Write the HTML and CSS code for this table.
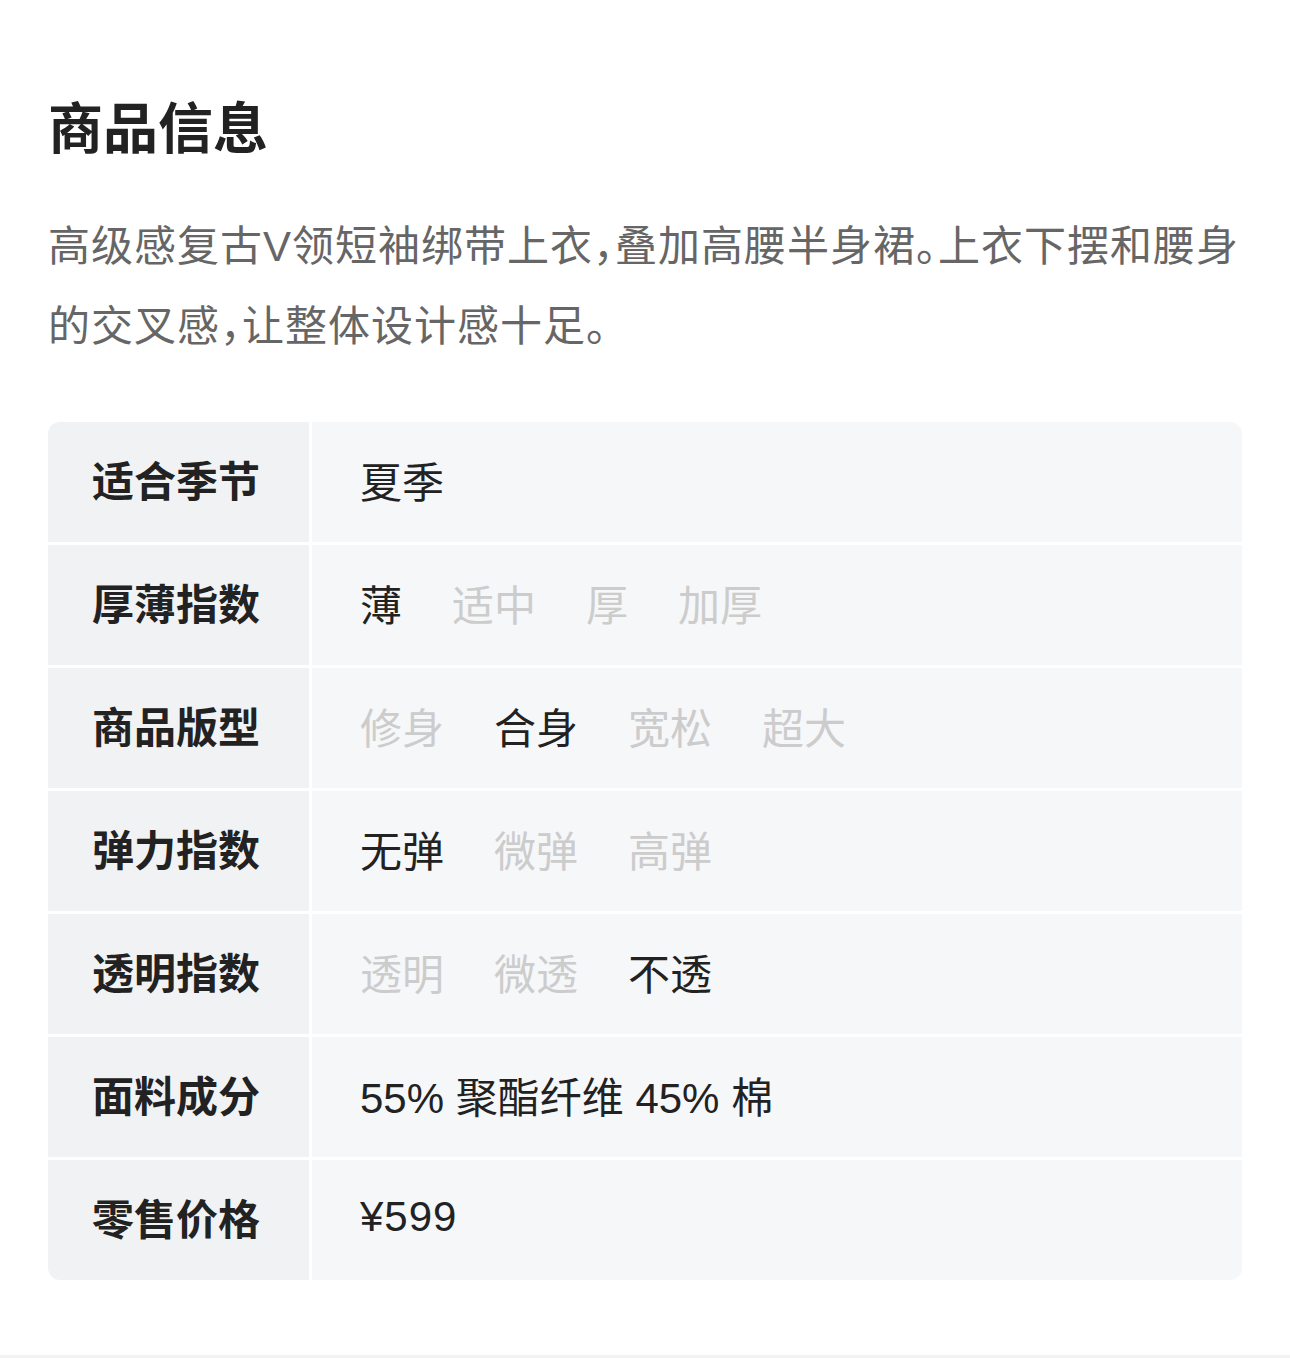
FILE: index.html
```html
<!DOCTYPE html>
<html lang="zh-CN">
<head>
<meta charset="utf-8">
<title>商品信息</title>
<link rel="stylesheet" href="styles.css">
</head>
<body>
<section class="info">
  <h1 class="title">商品信息</h1>
  <p class="desc">高级感复古V领短袖绑带上衣，叠加高腰半身裙。上衣下摆和腰身的交叉感，让整体设计感十足。</p>
  <div class="spec">
    <div class="label">适合季节</div>
    <div class="value"><span class="opt on">夏季</span></div>

    <div class="label">厚薄指数</div>
    <div class="value"><span class="opt on">薄</span><span class="opt">适中</span><span class="opt">厚</span><span class="opt">加厚</span></div>

    <div class="label">商品版型</div>
    <div class="value"><span class="opt">修身</span><span class="opt on">合身</span><span class="opt">宽松</span><span class="opt">超大</span></div>

    <div class="label">弹力指数</div>
    <div class="value"><span class="opt on">无弹</span><span class="opt">微弹</span><span class="opt">高弹</span></div>

    <div class="label">透明指数</div>
    <div class="value"><span class="opt">透明</span><span class="opt">微透</span><span class="opt on">不透</span></div>

    <div class="label">面料成分</div>
    <div class="value"><span class="opt on">55% 聚酯纤维 45% 棉</span></div>

    <div class="label">零售价格</div>
    <div class="value"><span class="opt on price">¥599</span></div>
  </div>
</section>
<div class="footer-band"></div>
</body>
</html>
```
FILE: styles.css
```css
html, body {
  margin: 0;
  padding: 0;
  background: #ffffff;
}
body {
  font-family: "Liberation Sans", "Noto Sans CJK SC", sans-serif;
  color: #222222;
}
.info {
  padding: 86px 48px 75px 48px;
}
.title {
  margin: 0;
  font-family: "Noto Sans CJK SC", sans-serif;
  font-size: 55px;
  line-height: 76px;
  font-weight: 700;
  color: #222222;
}
.desc {
  margin: 45px 0 0 0;
  font-size: 42px;
  line-height: 80px;
  color: #666666;
  letter-spacing: 1px;
  font-feature-settings: "halt";
}
.spec {
  margin-top: 55px;
  display: grid;
  grid-template-columns: 261px 1fr;
  grid-auto-rows: 120px;
  gap: 3px;
  border-radius: 12px;
  overflow: hidden;
}
.label {
  background: #f1f2f4;
  display: flex;
  align-items: center;
  padding: 0 0 7px 44px;
  font-family: "Noto Sans CJK SC", sans-serif;
  font-size: 42px;
  font-weight: 700;
  color: #222222;
}
.value {
  background: #f6f7f9;
  display: flex;
  align-items: center;
  gap: 50px;
  padding: 0 0 6px 48px;
  font-size: 42px;
}
.opt {
  color: #cccccc;
  white-space: pre;
}
.opt.on {
  color: #222222;
}
.price {
  letter-spacing: 1px;
}
.footer-band {
  height: 20px;
  background: #f2f2f2;
}
```
